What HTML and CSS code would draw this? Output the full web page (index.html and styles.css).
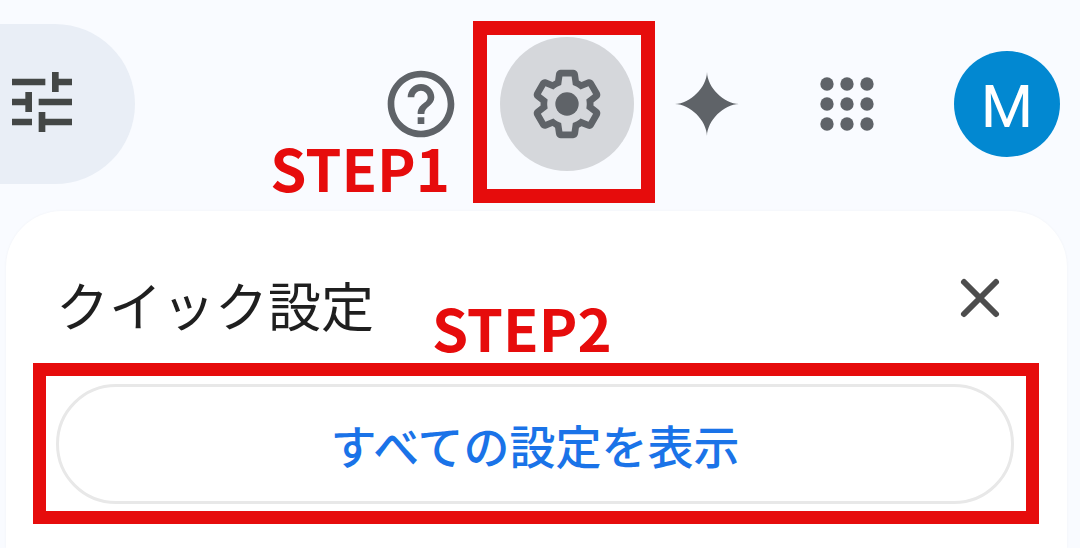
FILE: index.html
```html
<!DOCTYPE html>
<html lang="ja">
<head>
    <meta charset="UTF-8">
    <meta name="viewport" content="width=device-width, initial-scale=1.0">
    <title>クイック設定</title>
    <link rel="stylesheet" href="styles.css">
</head>
<body>
    <header class="topbar">
        <div class="search-end">
            <button class="tune-button" aria-label="検索オプション">
                <svg class="icon" viewBox="0 0 24 24"><path d="M3 17v2h6v-2H3zM3 5v2h10V5H3zm10 16v-2h8v-2h-8v-2h-2v6h2zM7 9v2H3v2h4v2h2V9H7zm14 4v-2H11v2h10zm-6-4h2V7h4V5h-4V3h-2v6z"/></svg>
            </button>
        </div>
        <nav class="actions">
            <button class="icon-button help" aria-label="サポート">
                <svg class="icon" viewBox="0 0 24 24"><path d="M11 18h2v-2h-2v2zm1-16C6.48 2 2 6.48 2 12s4.48 10 10 10 10-4.48 10-10S17.52 2 12 2zm0 18c-4.41 0-8-3.59-8-8s3.59-8 8-8 8 3.59 8 8-3.59 8-8 8zm0-14c-2.21 0-4 1.79-4 4h2c0-1.1.9-2 2-2s2 .9 2 2c0 2-3 1.75-3 5h2c0-2.25 3-2.5 3-5 0-2.21-1.79-4-4-4z"/></svg>
            </button>
            <div class="step step-one">
                <button class="icon-button active" aria-label="設定">
                    <svg class="icon" viewBox="0 0 24 24"><path d="M13.85 22.25h-3.7c-.74 0-1.36-.54-1.45-1.27l-.27-1.89c-.27-.14-.53-.29-.79-.46l-1.8.72c-.7.26-1.47-.03-1.81-.65L2.2 15.53c-.35-.66-.2-1.44.36-1.88l1.53-1.19c-.01-.15-.02-.3-.02-.46 0-.15.01-.31.02-.46l-1.52-1.19c-.59-.45-.74-1.26-.37-1.88l1.85-3.19c.34-.62 1.11-.9 1.79-.63l1.81.73c.26-.17.52-.32.78-.46l.27-1.91c.09-.7.71-1.25 1.44-1.25h3.7c.74 0 1.36.54 1.45 1.27l.27 1.89c.27.14.53.29.79.46l1.8-.72c.71-.26 1.48.03 1.82.65l1.84 3.18c.36.66.2 1.44-.36 1.88l-1.52 1.19c.01.15.02.3.02.46s-.01.31-.02.46l1.52 1.19c.56.45.72 1.23.37 1.86l-1.86 3.22c-.34.62-1.11.9-1.8.63l-1.8-.72c-.26.17-.52.32-.78.46l-.27 1.91c-.1.68-.72 1.22-1.46 1.22zm-3.23-2h2.76l.37-2.55.53-.22c.44-.18.88-.44 1.34-.78l.45-.34 2.38.96 1.38-2.4-2.03-1.58.07-.56c.03-.26.06-.51.06-.78s-.03-.53-.06-.78l-.07-.56 2.03-1.58-1.39-2.4-2.39.96-.45-.35c-.42-.32-.87-.58-1.33-.77l-.52-.22-.37-2.55h-2.76l-.37 2.55-.53.21c-.44.19-.88.44-1.34.79l-.45.33-2.38-.95-1.39 2.39 2.03 1.58-.07.56a7 7 0 0 0-.06.79c0 .26.02.53.06.78l.07.56-2.03 1.58 1.38 2.4 2.39-.96.45.35c.43.33.86.58 1.33.77l.53.22.38 2.55z"/><circle cx="12" cy="12" r="3.5"/></svg>
                </button>
                <span class="step-label">STEP1</span>
            </div>
            <button class="icon-button" aria-label="Gemini">
                <svg class="icon" viewBox="0 0 24 24"><path d="M12 2.4C12.1 7 17 11.9 21.6 12C17 12.1 12.1 17 12 21.6C11.9 17 7 12.1 2.4 12C7 11.9 11.9 7 12 2.4z"/></svg>
            </button>
            <button class="icon-button" aria-label="アプリ">
                <svg class="icon" viewBox="0 0 24 24"><circle cx="6" cy="6" r="2"/><circle cx="12" cy="6" r="2"/><circle cx="18" cy="6" r="2"/><circle cx="6" cy="12" r="2"/><circle cx="12" cy="12" r="2"/><circle cx="18" cy="12" r="2"/><circle cx="6" cy="18" r="2"/><circle cx="12" cy="18" r="2"/><circle cx="18" cy="18" r="2"/></svg>
            </button>
            <button class="avatar">M</button>
        </nav>
    </header>

    <main class="panel">
        <div class="panel-head">
            <h1>クイック設定</h1>
            <button class="close" aria-label="閉じる">
                <svg viewBox="0 0 68 68"><path d="M18 18L50 50M50 18L18 50"/></svg>
            </button>
        </div>
        <div class="step step-two">
            <button class="all-settings">すべての設定を表示</button>
            <span class="step-label">STEP2</span>
        </div>
    </main>
</body>
</html>
```
FILE: styles.css
```css
* {
    box-sizing: border-box;
}
body {
    margin: 0;
    min-height: 100vh;
    display: flex;
    flex-direction: column;
    overflow: hidden;
    background: #f9fbff;
    color: #1f1f1f;
    font-family: "Noto Sans CJK JP", "Noto Sans", sans-serif;
}
button {
    padding: 0;
    border: none;
    background: none;
    font-family: inherit;
    cursor: pointer;
}
.topbar {
    display: flex;
    align-items: center;
    justify-content: space-between;
    padding: 24px 20px 27px 0;
}
.search-end {
    width: 135px;
    height: 160px;
    padding: 38px 2px;
    background: #e9eef6;
    border-radius: 0 80px 80px 0;
}
.icon {
    display: block;
    width: 80px;
    height: 80px;
    fill: #5f6368;
}
.tune-button .icon {
    fill: #444746;
}
.actions {
    display: flex;
    align-items: center;
    gap: 6px;
}
.icon-button {
    display: flex;
    align-items: center;
    justify-content: center;
    width: 134px;
    height: 134px;
    border-radius: 50%;
}
.icon-button.help {
    margin-right: 6px;
}
.icon-button.active {
    background: #d5d7db;
}
.avatar {
    width: 106px;
    height: 106px;
    margin-left: 34px;
    padding-top: 4px;
    border-radius: 50%;
    background: #0288d1;
    color: #fff;
    font-family: Roboto, sans-serif;
    font-size: 60px;
}

/* red step markers */
.step {
    position: relative;
}
.step::after {
    content: "";
    position: absolute;
    border: 13px solid #e60c0c;
    pointer-events: none;
}
.step-one::after {
    inset: -16px -21px -32px -27px;
    border-width: 14px;
}
.step-two::after {
    inset: -21px -25px -20px -23px;
}
.step-label {
    position: absolute;
    color: #e60c0c;
    font-size: 58px;
    font-weight: 700;
    line-height: 60px;
}
.step-one .step-label {
    top: 100px;
    right: 184px;
}
.step-two .step-label {
    top: -87px;
    left: 376px;
}

.panel {
    flex: 1;
    margin: 0 13px 0 6px;
    padding: 53px 53px 44px 50px;
    background: #fff;
    border-radius: 56px 56px 0 0;
    box-shadow: 0 0 3px rgba(0, 0, 0, 0.04);
}
.panel-head {
    display: flex;
    justify-content: space-between;
    height: 120px;
}
h1 {
    margin: 0;
    padding-top: 6px;
    font-size: 53px;
    font-weight: 400;
    line-height: 68px;
}
.close {
    width: 68px;
    height: 68px;
}
.close svg {
    display: block;
    fill: none;
    stroke: #4d4d4d;
    stroke-width: 6;
    stroke-linecap: round;
}
.all-settings {
    display: block;
    width: 100%;
    height: 120px;
    border: 3px solid #e8e8e8;
    border-radius: 60px;
    color: #1a73e8;
    font-size: 46px;
    font-weight: 500;
}
```
